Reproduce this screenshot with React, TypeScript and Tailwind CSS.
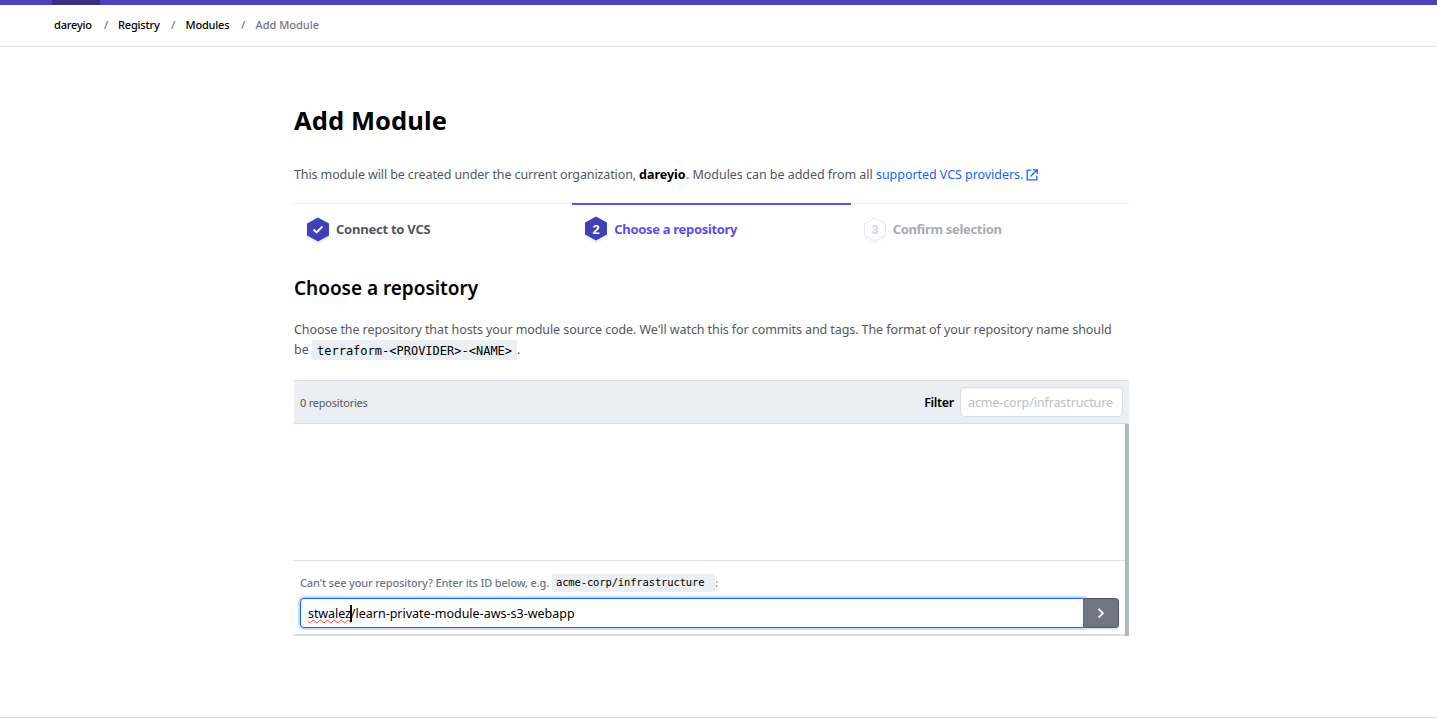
import React from 'react';

function Hexagon({ outline, children }: { outline?: boolean; children: React.ReactNode }) {
  return (
    <svg width="24" height="30" viewBox="0 0 24 30" className="shrink-0">
      <path d="M12 4.5 23 10v12.5l-11 6-11-6V10z" fill={outline ? '#f7f9fe' : '#edf2ff'} />
      <path
        d={outline ? 'M12 2 22.5 7.7v11.6L12 25 1.5 19.3V7.7z' : 'M12 1.5 23 7.5v12L12 25.5 1 19.5v-12z'}
        fill={outline ? '#fff' : '#4040b8'}
        stroke={outline ? '#e6e8ef' : 'none'}
        strokeLinejoin="round"
      />
      {children}
    </svg>
  );
}

function Breadcrumbs() {
  return (
    <nav className="flex h-[42px] items-center border-b border-[#dcdee6] pb-0.5 pl-[54px] text-[11px] font-medium leading-4 text-black">
      <span className="w-[50px] tracking-[-0.18px]">dareyio</span>
      <span className="w-[14px] text-[#6f7682]">/</span>
      <span className="w-[53px] tracking-[-0.18px]">Registry</span>
      <span className="w-[14.5px] text-[#6f7682]">/</span>
      <span className="w-[55.5px] tracking-[-0.18px]">Modules</span>
      <span className="w-[14.5px] text-[#6f7682]">/</span>
      <span className="text-[#6f7682]">Add Module</span>
    </nav>
  );
}

function Steps() {
  return (
    <ol className="mt-[18px] grid h-[50px] grid-cols-3 text-[13px] font-bold">
      <li className="flex items-start border-t border-[#ebeef2] pl-3 pt-3 text-[#525761]">
        <Hexagon>
          <path d="m7.5 13.5 3 3 6-6" fill="none" stroke="#fff" strokeWidth="1.9" />
        </Hexagon>
        <span className="ml-1.5 mt-[3px] whitespace-nowrap leading-5 tracking-[-0.24px]">Connect to VCS</span>
      </li>
      <li className="flex items-start border-t-2 border-[#5c4ee5] pl-3 pt-2.5 text-[#5c4ee5]">
        <Hexagon>
          <text x="12" y="18.5" textAnchor="middle" fontSize="13" fill="#fff" fontFamily="Liberation Sans" fontWeight="700">2</text>
        </Hexagon>
        <span className="ml-1.5 mt-1 whitespace-nowrap leading-5 tracking-[-0.32px]">Choose a repository</span>
      </li>
      <li className="flex items-start border-t border-[#ebeef2] pl-3 pt-3 text-[#a8abb2]">
        <Hexagon outline>
          <text x="12" y="18" textAnchor="middle" fontSize="13" fill="#d5d7df" fontFamily="Liberation Sans" fontWeight="700">3</text>
        </Hexagon>
        <span className="ml-1.5 mt-[3px] whitespace-nowrap leading-5 tracking-[-0.32px]">Confirm selection</span>
      </li>
    </ol>
  );
}

function RepositoryPicker() {
  return (
    <section className="mt-5 h-[256px] border-b-2 border-[#dcdee6]">
      <div className="flex h-11 items-center border-y border-[#d9dde4] bg-[#ebeef3] px-1.5">
        <span className="pt-0.5 text-[11px] tracking-[-0.22px] text-[#525761]">0 repositories</span>
        <label className="ml-auto mr-1.5 pt-[3px] text-[12.5px] font-semibold tracking-[-0.3px] text-black">Filter</label>
        <div className="flex h-[30px] w-[163px] items-center rounded-sm border border-[#dcdee6] bg-white pl-[7px] pt-[3px] text-[12.5px] text-[#bcbec4] shadow-[inset_0_1px_2px_rgba(0,0,0,0.06)]">
          <span className="whitespace-nowrap tracking-[-0.11px]">acme-corp/infrastructure</span>
        </div>
      </div>
      <div className="flex h-[212px]">
        <div className="min-w-0 flex-1">
          <div className="h-[136px]" />
          <div className="h-[74px] border-t border-[#dcdee6] pl-1.5 pr-[6px] pt-[13px]">
            <div className="flex h-[18px] items-center whitespace-nowrap text-[11px] font-medium text-[#6f7682]">
              <span className="w-[252px] tracking-[-0.15px]">Can't see your repository? Enter its ID below, e.g.</span>
              <code className="flex h-[18px] w-[163px] items-center bg-[#ebeef2] pl-1 font-['DejaVu_Sans_Mono',monospace] text-[10.5px] font-normal tracking-[-0.14px] text-black">
                acme-corp/infrastructure
              </code>
              <span>:</span>
            </div>
            <div className="mt-1.5 flex h-[30px]">
              <div className="flex w-[784px] items-center rounded-l-sm border border-[#1563ff] bg-white pl-[7px] pt-0.5 text-[12.5px] text-black shadow-[0_0_0_2px_#ccdcff]">
                <span className="inline-block whitespace-nowrap tracking-[-0.08px] underline decoration-[#ff4040] decoration-wavy decoration-[0.6px] underline-offset-1">stwalez</span>
                <span className="-ml-px mb-0.5 h-[17px] w-0.5 shrink-0 bg-black" />
                <span className="-ml-px whitespace-nowrap">/learn-private-module-aws-s3-webapp</span>
              </div>
              <button className="z-10 flex w-[35px] items-center justify-center rounded-r-sm border border-l-0 border-[#525761] bg-[#6f7682] shadow-[0_2px_1px_#e7e8eb]">
                <svg width="12" height="12" viewBox="0 0 12 12" fill="none" stroke="#fff" strokeWidth="1.8">
                  <path d="m3.5 1.8 4.4 4.4-4.4 4.4" />
                </svg>
              </button>
            </div>
          </div>
        </div>
        <div className="w-1 bg-[#b0b7c2]" />
      </div>
    </section>
  );
}

export default function App() {
  return (
    <div className="flex h-[721px] w-[1437px] flex-col overflow-hidden bg-white font-['Noto_Sans',sans-serif]">
      <div className="h-[5px] shrink-0 bg-[#4f40bb] pl-[52px]">
        <div className="h-full w-12 bg-[#3a3187]" />
      </div>
      <Breadcrumbs />
      <main className="ml-[294px] mt-[55px] w-[835px]">
        <h1 className="h-9 whitespace-nowrap text-[25.5px] font-bold leading-9 tracking-[0.1px] text-black">Add Module</h1>
        <p className="mt-[27px] flex h-5 items-center whitespace-nowrap text-[12.5px] leading-5 text-[#525761]">
          <span className="w-[345px] tracking-[-0.11px]">This module will be created under the current organization,</span>
          <b className="w-[47px] text-black">dareyio</b>
          <span className="w-[190px] tracking-[-0.04px]">. Modules can be added from all</span>
          <a className="w-[150px] tracking-[-0.05px] text-[#1563ff]">supported VCS providers.</a>
          <svg width="12" height="12" viewBox="0 0 12 12" fill="none" stroke="#1563ff" strokeWidth="1.3">
            <path d="M5.2 1.2H1.2v9.6h9.6V6.8M7 .8h4.2V5M11 1 4.5 7.5" />
          </svg>
        </p>
        <Steps />
        <h2 className="mt-[21px] h-7 whitespace-nowrap text-[19px] font-semibold leading-7 tracking-[-0.03px] text-black">Choose a repository</h2>
        <div className="mt-[18px] text-[12.5px] leading-5 text-[#525761]">
          <p className="whitespace-nowrap tracking-[-0.087px]">
            Choose the repository that hosts your module source code. We'll watch this for commits and tags. The format of your repository name should
          </p>
          <p className="flex h-5 items-center">
            <span className="w-[18px]">be</span>
            <code className="flex h-5 w-[205px] items-center bg-[#ebeef2] pl-[5px] pt-0.5 font-['DejaVu_Sans_Mono',monospace] text-xs text-black">
              {'terraform-<PROVIDER>-<NAME>'}
            </code>
            <span>.</span>
          </p>
        </div>
        <RepositoryPicker />
      </main>
      <div className="mt-auto h-1 shrink-0 border-t border-[#dcdee6]" />
    </div>
  );
}
